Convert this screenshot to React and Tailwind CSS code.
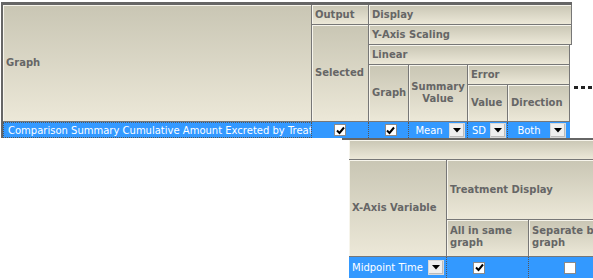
import React from "react";

const head =
  "bg-linear-to-b from-[#c9c6b4] to-[#ece8d8] border-r border-b border-[#777] shadow-[inset_1px_1px_0_#f7f5ec] flex items-center px-[3px] text-[#666] font-bold leading-[12px] overflow-hidden";

const Check = ({ checked }) => (
  <span className="w-[12px] h-[12px] bg-white border border-[#8a8a8a] flex items-center justify-center">
    {checked && (
      <svg width="9" height="9" viewBox="0 0 9 9">
        <path d="M1 4.5 L3.5 7 L8 1.5" stroke="#000" strokeWidth="2" fill="none" />
      </svg>
    )}
  </span>
);

const Drop = () => (
  <span className="w-[16px] h-[15px] bg-[#efefef] border border-[#d8d8d8] shadow-[inset_-1px_-1px_0_#bbb] flex items-center justify-center shrink-0">
    <svg width="8" height="5" viewBox="0 0 8 5">
      <path d="M0 0 H8 L4 4.5 Z" fill="#000" />
    </svg>
  </span>
);

const blue = "bg-[#3399ff] text-white flex items-center border-r border-dotted border-[#555]";

export default function App() {
  return (
    <div
      className="w-[593px] h-[280px] overflow-hidden bg-white text-[10px]"
      style={{ fontFamily: '"DejaVu Sans", Verdana, sans-serif' }}
    >
      <div className="flex items-start">
        <div className="ml-[1px] mt-[2px] border-l-2 border-t-[3px] border-[#666]">
          <div className="grid grid-cols-[309px_57px_40px_59px_40px_62px_2px] grid-rows-[20px_20px_20px_20px_37px_16px]">
            <div className={`${head} col-start-1 row-start-1 row-span-5`}>Graph</div>
            <div className={`${head} col-start-2 row-start-1`}>Output</div>
            <div className={`${head} col-start-3 col-span-5 row-start-1`}>Display</div>
            <div className={`${head} col-start-2 row-start-2 row-span-4`}>Selected</div>
            <div className={`${head} col-start-3 col-span-5 row-start-2`}>Y-Axis Scaling</div>
            <div className={`${head} col-start-3 col-span-4 row-start-3`}>Linear</div>
            <div className={`${head} col-start-3 row-start-4 row-span-2`}>Graph</div>
            <div className={`${head} col-start-4 row-start-4 row-span-2 justify-center text-center`}>
              Summary<br />Value
            </div>
            <div className={`${head} col-start-5 col-span-2 row-start-4`}>Error</div>
            <div className={`${head} col-start-5 row-start-5`}>Value</div>
            <div className={`${head} col-start-6 row-start-5`}>Direction</div>

            <div className={`${blue} col-start-1 row-start-6 pl-[4px] whitespace-nowrap overflow-hidden border border-dotted border-[#555]`}>
              Comparison Summary Cumulative Amount Excreted by Treat
            </div>
            <div className={`${blue} col-start-2 row-start-6 justify-center`}>
              <Check checked />
            </div>
            <div className={`${blue} col-start-3 row-start-6 justify-center pl-[4px]`}>
              <Check checked />
            </div>
            <div className={`${blue} col-start-4 row-start-6 pr-[2px]`}>
              <span className="flex-1 text-center">Mean</span>
              <Drop />
            </div>
            <div className={`${blue} col-start-5 row-start-6 pr-[1px]`}>
              <span className="flex-1 text-center">SD</span>
              <Drop />
            </div>
            <div className={`${blue} col-start-6 row-start-6 pr-[4px] border-r-0`}>
              <span className="flex-1 text-center">Both</span>
              <Drop />
            </div>
          </div>
        </div>
        <div className="ml-[2px] mt-[86px] flex gap-[3px]">
          <span className="w-[4px] h-[3px] bg-[#222]" />
          <span className="w-[4px] h-[3px] bg-[#222]" />
          <span className="w-[4px] h-[3px] bg-[#222]" />
        </div>
      </div>

      <div className="ml-[342px] border-t-2 border-[#666] w-[300px]">
        <div className="ml-[7px] grid grid-cols-[98px_82px_82px] grid-rows-[20px_60px_37px_21px]">
          <div className={`${head} col-start-1 col-span-3 row-start-1`}></div>
          <div className={`${head} col-start-1 row-start-2 row-span-2`}>X-Axis Variable</div>
          <div className={`${head} col-start-2 col-span-2 row-start-2`}>Treatment Display</div>
          <div className={`${head} col-start-2 row-start-3 items-start pt-[5px]`}>
            All in same<br />graph
          </div>
          <div className={`${head} col-start-3 row-start-3 items-start pt-[5px] whitespace-nowrap`}>
            Separate by<br />graph
          </div>

          <div className={`${blue} col-start-1 row-start-4 pl-[3px] pr-[2px]`}>
            <span className="flex-1 whitespace-nowrap">Midpoint Time</span>
            <Drop />
          </div>
          <div className={`${blue} col-start-2 row-start-4 pl-[26px]`}>
            <Check checked />
          </div>
          <div className={`${blue} col-start-3 row-start-4 justify-center`}>
            <Check />
          </div>
        </div>
      </div>
    </div>
  );
}
